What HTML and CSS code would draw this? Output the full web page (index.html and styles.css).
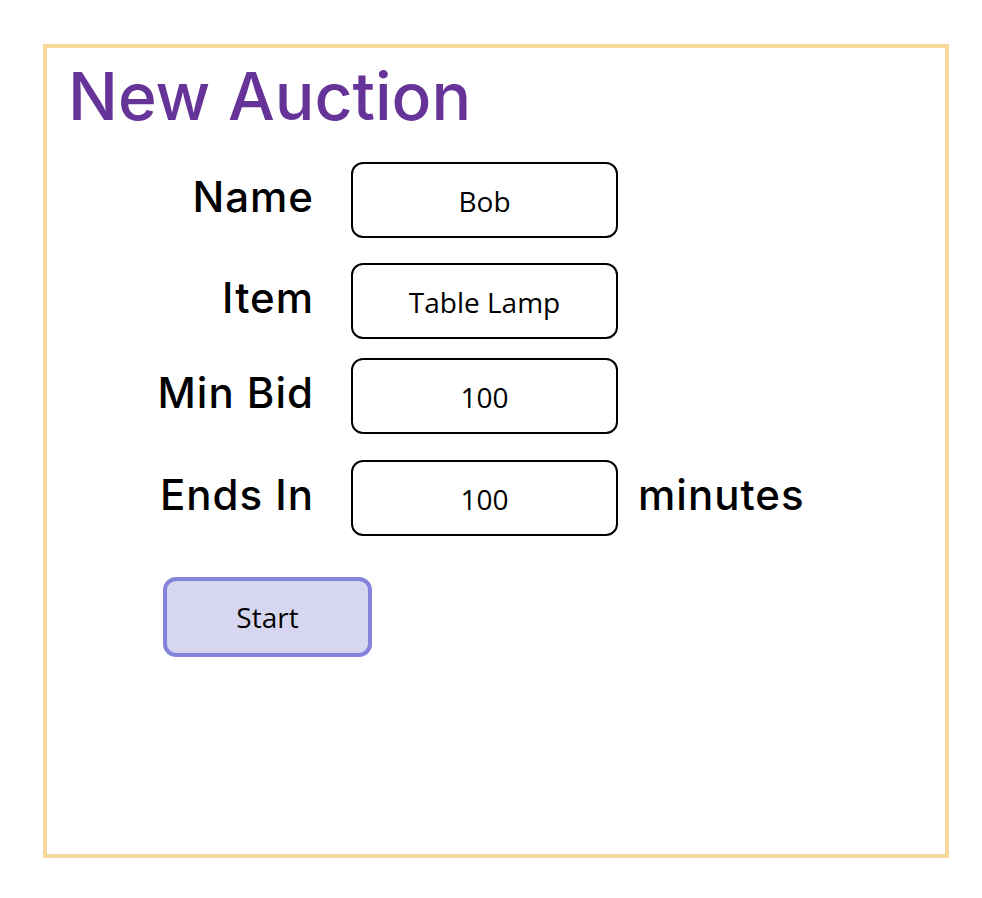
FILE: index.html
```html
<!DOCTYPE html>
<html>
<head>
<meta charset="utf-8">
<link rel="stylesheet" href="styles.css">
</head>
<body>
<div class="frame">
  <h1 class="title">New Auction</h1>
  <div class="form">
    <div class="row row-name">
      <div class="label">Name</div>
      <div class="field">Bob</div>
    </div>
    <div class="row row-item">
      <div class="label">Item</div>
      <div class="field">Table Lamp</div>
    </div>
    <div class="row row-bid">
      <div class="label">Min Bid</div>
      <div class="field">100</div>
    </div>
    <div class="row row-ends">
      <div class="label">Ends In</div>
      <div class="field">100</div>
      <div class="unit">minutes</div>
    </div>
  </div>
  <div class="actions">
    <button class="start">Start</button>
  </div>
</div>
</body>
</html>
```

FILE: styles.css
```css
html, body {
  margin: 0;
  padding: 0;
  background: #ffffff;
}
body {
  padding: 44px 0 0 43px;
}
.frame {
  box-sizing: border-box;
  width: 906px;
  height: 814px;
  border: 4px solid #fad79b;
  padding: 0 0 0 21px;
}
.title {
  margin: 8px 0 0 0;
  font-family: "Inter", sans-serif;
  font-weight: 500;
  font-size: 66px;
  line-height: 80px;
  color: #663399;
}
.form {
  display: flex;
  flex-direction: column;
  margin-top: 26px;
}
.row {
  display: grid;
  grid-template-columns: 245px 267px auto;
  column-gap: 38px;
  align-items: start;
}
.row-item { margin-top: 25px; }
.row-bid { margin-top: 19px; }
.row-ends { margin-top: 26px; }
.label,
.unit {
  font-family: "Inter", sans-serif;
  font-size: 42px;
  font-weight: 500;
  line-height: 42px;
  color: #000;
  letter-spacing: 1px;
  margin-top: 14px;
}
.label {
  text-align: right;
  margin-right: -1px;
}
.unit {
  margin-left: -18px;
}
.field {
  box-sizing: border-box;
  height: 76px;
  border: 2px solid #000;
  border-radius: 12px;
  display: flex;
  align-items: center;
  justify-content: center;
  font-family: "Open Sans", sans-serif;
  font-size: 28px;
  color: #000;
  padding-top: 2px;
}
.actions {
  margin-top: 41px;
  padding-left: 95px;
}
.start {
  box-sizing: border-box;
  width: 209px;
  height: 80px;
  border: 4px solid #8484dc;
  border-radius: 13px;
  background: #d6d6f0;
  font-family: "Open Sans", sans-serif;
  font-size: 28px;
  color: #000;
  padding: 0;
  display: block;
}
```
